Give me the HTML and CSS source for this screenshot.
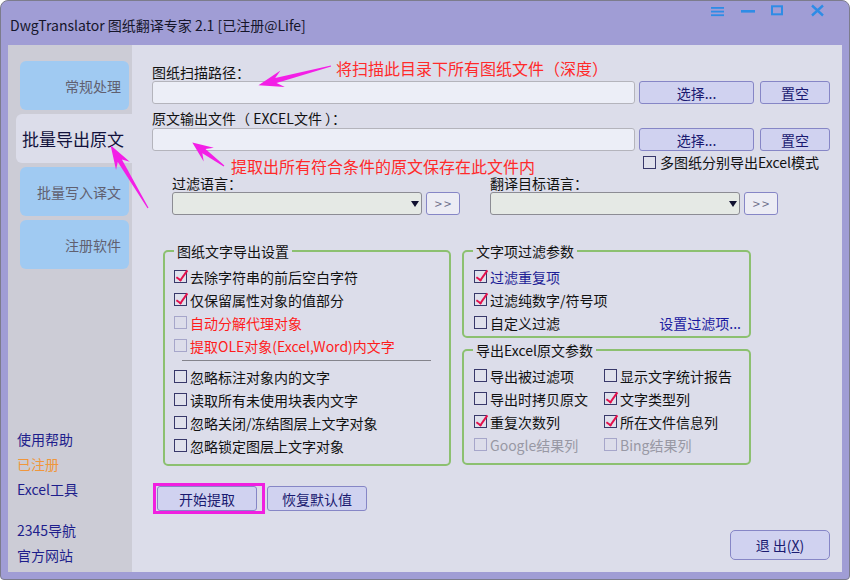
FILE: index.html
```html
<!DOCTYPE html>
<html lang="zh-CN">
<head>
<meta charset="utf-8">
<title>DwgTranslator</title>
<link rel="stylesheet" href="styles.css">
</head>
<body>
<div class="window">
  <header class="titlebar">
    <span class="title">DwgTranslator 图纸翻译专家 2.1 [已注册@Life]</span>
    <svg class="winctl" width="120" height="16" viewBox="0 0 120 16">
      <rect x="2" y="3" width="13" height="1.8"/>
      <rect x="2" y="6.7" width="13" height="1.8"/>
      <rect x="2" y="10.3" width="13" height="1.8"/>
      <rect x="32" y="6" width="14" height="2.6"/>
      <rect x="63" y="2.3" width="10" height="8" fill="none" stroke="#2E8CE6" stroke-width="2"/>
      <path d="M103 1.5 L114 11.5 M114 1.5 L103 11.5" stroke="#2E8CE6" stroke-width="2.4" fill="none"/>
    </svg>
  </header>
  <div class="body">
    <aside class="sidebar">
      <nav class="tabs">
        <div class="tab">常规处理</div>
        <div class="tab active">批量导出原文</div>
        <div class="tab">批量写入译文</div>
        <div class="tab">注册软件</div>
      </nav>
      <ul class="links">
        <li>使用帮助</li>
        <li class="reg">已注册</li>
        <li>Excel工具</li>
        <li class="sp">2345导航</li>
        <li>官方网站</li>
      </ul>
    </aside>
    <main class="main">
      <div class="field-label">图纸扫描路径：</div>
      <div class="path-row">
        <div class="input"></div>
        <button class="btn sel">选择...</button>
        <button class="btn clr">置空</button>
      </div>
      <div class="field-label l2">原文输出文件（ EXCEL文件 ）：</div>
      <div class="path-row r2">
        <div class="input"></div>
        <button class="btn sel">选择...</button>
        <button class="btn clr">置空</button>
      </div>
      <div class="multi"><span class="cb"></span>多图纸分别导出Excel模式</div>
      <div class="lang-row">
        <div class="lang">
          <div class="field-label">过滤语言：</div>
          <div class="combo-row">
            <div class="select"><span class="caret"></span></div>
            <button class="btn more">&gt;&gt;</button>
          </div>
        </div>
        <div class="lang">
          <div class="field-label">翻译目标语言：</div>
          <div class="combo-row">
            <div class="select"><span class="caret"></span></div>
            <button class="btn more">&gt;&gt;</button>
          </div>
        </div>
      </div>
      <div class="groups">
        <fieldset class="group g1">
          <legend>图纸文字导出设置</legend>
          <div class="items">
            <div class="ck"><span class="cb on"></span>去除字符串的前后空白字符</div>
            <div class="ck"><span class="cb on"></span>仅保留属性对象的值部分</div>
            <div class="ck red"><span class="cb dis"></span>自动分解代理对象</div>
            <div class="ck red"><span class="cb dis"></span>提取OLE对象(Excel,Word)内文字</div>
            <div class="sep"></div>
            <div class="ck"><span class="cb"></span>忽略标注对象内的文字</div>
            <div class="ck"><span class="cb"></span>读取所有未使用块表内文字</div>
            <div class="ck"><span class="cb"></span>忽略关闭/冻结图层上文字对象</div>
            <div class="ck"><span class="cb"></span>忽略锁定图层上文字对象</div>
          </div>
        </fieldset>
        <div class="rightcol">
          <fieldset class="group g2">
            <legend>文字项过滤参数</legend>
            <div class="items">
              <div class="ck navy"><span class="cb on"></span>过滤重复项</div>
              <div class="ck"><span class="cb on"></span>过滤纯数字/符号项</div>
              <div class="ck split"><span class="lbl"><span class="cb"></span>自定义过滤</span><span class="link">设置过滤项...</span></div>
            </div>
          </fieldset>
          <fieldset class="group g3">
            <legend>导出Excel原文参数</legend>
            <div class="items grid2">
              <div class="ck"><span class="cb"></span>导出被过滤项</div>
              <div class="ck"><span class="cb"></span>显示文字统计报告</div>
              <div class="ck"><span class="cb"></span>导出时拷贝原文</div>
              <div class="ck"><span class="cb on"></span>文字类型列</div>
              <div class="ck"><span class="cb on"></span>重复次数列</div>
              <div class="ck"><span class="cb on"></span>所在文件信息列</div>
              <div class="ck grey"><span class="cb dis"></span>Google结果列</div>
              <div class="ck grey"><span class="cb dis"></span>Bing结果列</div>
            </div>
          </fieldset>
        </div>
      </div>
      <div class="actions">
        <span class="hl"><button class="btn act">开始提取</button></span>
        <button class="btn act">恢复默认值</button>
      </div>
      <div class="exit-row"><button class="btn exit">退 出(<u>X</u>)</button></div>
    </main>
  </div>
</div>
<svg class="arrows" width="850" height="580" viewBox="0 0 850 580">
  <g fill="#F31FE6">
    <polygon transform="translate(331 66) rotate(165.2)" points="0,-0.6 57,-2.6 50,-8.5 75,0 50,8.5 57,2.6 0,0.6"/>
    <polygon transform="translate(224 166) rotate(-143.4)" points="0,-0.6 25,-2.6 19,-8.5 39.5,0 19,8.5 25,2.6 0,0.6"/>
    <polygon transform="translate(148 208) rotate(-120.8)" points="0,-0.6 55,-2.4 49,-8 73,0 49,8 55,2.4 0,0.6"/>
  </g>
</svg>
<div class="note n1">将扫描此目录下所有图纸文件（深度）</div>
<div class="note n2">提取出所有符合条件的原文保存在此文件内</div>
</body>
</html>
```

FILE: styles.css
```css
body {
  margin: 0;
  font-family: "Noto Sans CJK SC", sans-serif;
  font-size: 14px;
  color: #111;
}

.window {
  position: relative;
  width: 850px;
  height: 580px;
  box-sizing: border-box;
  border: 1px solid #7c7c8c;
  border-radius: 8px 8px 4px 4px;
  background: #A09DD5;
  display: flex;
  flex-direction: column;
  overflow: hidden;
}

.titlebar {
  height: 44px;
  flex: none;
  display: flex;
  align-items: flex-start;
}

.title {
  margin: 14px 0 0 9px;
  font-size: 14px;
  line-height: 20px;
  color: #15152a;
}

.winctl {
  margin: 3px 20px 0 auto;
  fill: #2E8CE6;
}

.body {
  flex: 1;
  display: flex;
  margin: 0 7px 7px 7px;
  min-height: 0;
}

.sidebar {
  width: 124px;
  flex: none;
  background: #CCCCD6;
  display: flex;
  flex-direction: column;
  padding-top: 16px;
  box-sizing: border-box;
}

.tabs {
  display: flex;
  flex-direction: column;
  gap: 4px;
}

.tab {
  height: 49px;
  margin-left: 12px;
  width: 109px;
  box-sizing: border-box;
  border-radius: 6px;
  background: #A0CAF2;
  color: #606070;
  font-size: 14px;
  display: flex;
  align-items: center;
  justify-content: flex-end;
  padding-right: 8px;
}

.tab.active {
  margin-left: 8px;
  width: 116px;
  border-radius: 6px 0 0 6px;
  background: #DCDDEA;
  color: #12123c;
  font-size: 17px;
  justify-content: flex-start;
  padding-left: 6px;
}

.links {
  list-style: none;
  margin: auto 0 0 0;
  padding: 0 0 4px 9px;
  color: #1e1e8c;
  line-height: 25px;
}

.links .reg { color: #F0963C; }
.links .sp { margin-top: 16px; }

.main {
  flex: 1;
  background: #DCDDEA;
  display: flex;
  flex-direction: column;
  padding: 19px 12px 12px 20px;
  min-width: 0;
}

.field-label {
  line-height: 16px;
  color: #111;
}

.field-label.l2 { margin-top: 6px; }

.path-row {
  display: flex;
  margin-top: 1px;
  height: 23px;
}

.path-row.r2 { margin-top: 2px; }

.input {
  flex: 1;
  box-sizing: border-box;
  border: 1px solid #b4b4bc;
  border-radius: 3px;
  background: #ECEEF7;
}

.btn {
  font: inherit;
  font-size: 14px;
  color: #1a1a70;
  background: #D0D2F0;
  border: 1px solid #8686C6;
  border-radius: 3px;
  padding: 0;
  box-sizing: border-box;
}

.btn.sel { width: 115px; margin-left: 4px; }
.btn.clr { width: 70px; margin-left: 6px; }

.multi {
  margin: 3px 0 0 491px;
  line-height: 16px;
  display: flex;
  align-items: center;
  gap: 4px;
  color: #111;
  white-space: nowrap;
}

.lang-row {
  display: grid;
  grid-template-columns: 318px auto;
  margin: 5px 0 0 20px;
}

.combo-row {
  display: flex;
  margin-top: 1px;
  height: 23px;
  gap: 4px;
}

.select {
  width: 250px;
  box-sizing: border-box;
  border: 1px solid #8c8c94;
  border-radius: 3px;
  background: #E5E9E5;
  display: flex;
  align-items: center;
  justify-content: flex-end;
  padding-right: 2px;
}

.caret {
  width: 0;
  height: 0;
  border-top: 6px solid #101030;
  border-left: 4.5px solid transparent;
  border-right: 4.5px solid transparent;
}

.btn.more {
  width: 34px;
  background: #ECECF4;
  color: #70708c;
  font-size: 13px;
  letter-spacing: 2px;
  padding-left: 2px;
}

.groups {
  display: flex;
  gap: 11px;
  margin: 28px 0 0 11px;
}

.group {
  margin: 0;
  padding: 0;
  border: 2px solid #8CC070;
  border-radius: 5px;
  min-width: 0;
  box-sizing: border-box;
}

.group legend {
  margin-left: 9px;
  padding: 0 3px;
  line-height: 16px;
  color: #111;
}

.g1 { width: 288px; }

.rightcol {
  display: flex;
  flex-direction: column;
  gap: 4px;
  width: 289px;
}

.items {
  padding: 6px 8px 7px 9px;
}

.g2 .items { padding: 6px 8px 2px 10px; }
.g3 .items { padding: 6px 8px 7px 10px; }

.ck {
  height: 23px;
  display: flex;
  align-items: center;
  gap: 3px;
  color: #111;
  white-space: nowrap;
}

.ck.red { color: #FF1C1C; }
.ck.navy { color: #1e1e96; }
.ck.grey { color: #9898a4; }

.ck.split { justify-content: space-between; }
.ck .lbl { display: flex; align-items: center; gap: 3px; }
.ck .link { color: #1a1aa0; }

.grid2 {
  display: grid;
  grid-template-columns: 130px auto;
}

.sep {
  height: 1px;
  background: #84848c;
  margin: 3px 0 4px 8px;
  width: 249px;
}

.cb {
  position: relative;
  width: 13px;
  height: 13px;
  box-sizing: border-box;
  border: 1px solid #38386a;
  flex: none;
  background: #E0E1EC;
}

.cb.dis {
  border-color: #A6A6CA;
  background: transparent;
}

.cb.on::after {
  content: "";
  position: absolute;
  left: 4px;
  top: -3px;
  width: 4px;
  height: 11px;
  border: solid #E3104C;
  border-width: 0 2px 2px 0;
  transform: rotate(35deg);
}

.actions {
  display: flex;
  align-items: center;
  gap: 2px;
  margin: 17px 0 0 1px;
}

.hl {
  display: inline-flex;
  border: 3px solid #F01FE0;
  padding: 0 5px 0 1px;
}

.btn.act {
  width: 100px;
  height: 25px;
}

.exit-row {
  margin-top: auto;
  display: flex;
  justify-content: flex-end;
}

.btn.exit {
  width: 100px;
  height: 30px;
  border-radius: 5px;
}

.arrows {
  position: absolute;
  left: 0;
  top: 0;
  pointer-events: none;
}

.note {
  position: absolute;
  font-size: 16px;
  line-height: 16px;
  color: #FF2A2A;
  white-space: nowrap;
}

.n1 { left: 336px; top: 60px; }
.n2 { left: 231px; top: 158px; }
```
